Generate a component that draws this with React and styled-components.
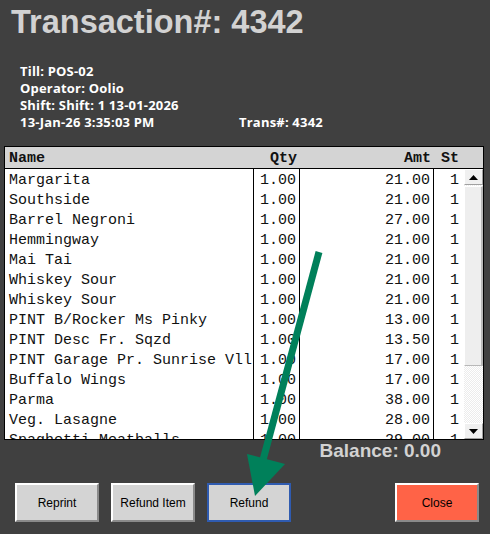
import React from 'react';
import styled, { createGlobalStyle } from 'styled-components';

const GlobalStyle = createGlobalStyle`
  html, body {
    margin: 0;
    padding: 0;
    background: #404040;
  }
`;

const Screen = styled.div`
  position: relative;
  width: 490px;
  height: 534px;
  overflow: hidden;
  background: #404040;
  font-family: "Liberation Sans", Arial, sans-serif;
`;

const Title = styled.div`
  padding: 4px 0 0 11px;
  font-size: 32.5px;
  line-height: 36px;
  font-weight: 700;
  color: #d2d2d2;
  white-space: nowrap;
`;

const Info = styled.div`
  margin-top: 23px;
  padding-left: 20px;
  font-family: "Open Sans", "Noto Sans", sans-serif;
  font-size: 13px;
  line-height: 17px;
  letter-spacing: 0.2px;
  font-weight: 700;
  color: #ffffff;
`;

const InfoLine = styled.div`
  display: flex;
  white-space: nowrap;
`;

const InfoLeft = styled.span`
  width: 219px;
`;

const Table = styled.div`
  margin: 15px 0 0 4px;
  width: 478px;
  border: 1px solid #000;
  background: #fff;
  font-family: "Liberation Mono", "Courier New", monospace;
  font-size: 15px;
  color: #111;
`;

const Header = styled.div`
  display: flex;
  box-sizing: border-box;
  height: 22px;
  padding-top: 1px;
  line-height: 21px;
  background: #d4d4d4;
  border-bottom: 1px solid #000;
  font-weight: 700;
`;

const Body = styled.div`
  display: flex;
  height: 270px;
`;

const Rows = styled.div`
  flex: 1;
  overflow: hidden;
`;

const Row = styled.div`
  display: flex;
  height: 20px;
  line-height: 20px;
`;

const Cell = styled.div`
  box-sizing: border-box;
  width: ${p => p.$w}px;
  flex: ${p => (p.$w ? 'none' : 1)};
  padding: ${p => (p.$right ? `${p.$top || 0}px 3px 0 0` : `${p.$top || 0}px 0 0 4px`)};
  text-align: ${p => (p.$right ? 'right' : 'left')};
  border-right: ${p => (p.$line ? '1px solid #000' : 'none')};
  white-space: nowrap;
  overflow: hidden;
`;

const Scrollbar = styled.div`
  width: 19px;
  display: flex;
  flex-direction: column;
  background-color: #f6f6f6;
  background-image: repeating-conic-gradient(#ffffff 0 25%, #ececec 0 50%);
  background-size: 2px 2px;
`;

const ScrollButton = styled.div`
  box-sizing: border-box;
  height: 16px;
  display: flex;
  align-items: center;
  justify-content: center;
  background: #f0f0f0;
  border-top: 1px solid #fff;
  border-left: 1px solid #fff;
  border-right: 1px solid #a0a0a0;
  border-bottom: 1px solid #a0a0a0;
  margin-top: ${p => (p.$down ? 'auto' : '0')};
`;

const Thumb = styled.div`
  box-sizing: border-box;
  height: 180px;
  margin-top: 1px;
  background: #eeeeee;
  border-top: 1px solid #fff;
  border-left: 1px solid #fff;
  border-right: 2px solid #b8b8b8;
  border-bottom: 1px solid #b8b8b8;
`;

const Balance = styled.div`
  padding-right: 49px;
  text-align: right;
  font-size: 19px;
  line-height: 22px;
  font-weight: 700;
  color: #d2d2d2;
`;

const Buttons = styled.div`
  display: flex;
  gap: 12px;
  margin-top: 21px;
  padding: 0 11px 0 15px;
`;

const Button = styled.button`
  box-sizing: border-box;
  width: 84px;
  height: 39px;
  margin-left: ${p => (p.$push ? 'auto' : '0')};
  padding: 0;
  font-family: "Liberation Sans", Arial, sans-serif;
  font-size: 12px;
  color: #000;
  background: ${p => (p.$danger ? '#ff6347' : '#d4d4d4')};
  border: 2px solid;
  border-color: ${p => (p.$active ? '#2f5bb0' : '#ffffff #8a8a8a #8a8a8a #ffffff')};
  cursor: pointer;
`;

const Overlay = styled.svg`
  position: absolute;
  left: 0;
  top: 0;
  pointer-events: none;
`;

const items = [
  ['Margarita', '1.00', '21.00'],
  ['Southside', '1.00', '21.00'],
  ['Barrel Negroni', '1.00', '27.00'],
  ['Hemmingway', '1.00', '21.00'],
  ['Mai Tai', '1.00', '21.00'],
  ['Whiskey Sour', '1.00', '21.00'],
  ['Whiskey Sour', '1.00', '21.00'],
  ['PINT B/Rocker Ms Pinky', '1.00', '13.00'],
  ['PINT Desc Fr. Sqzd', '1.00', '13.50'],
  ['PINT Garage Pr. Sunrise Vll', '1.00', '17.00'],
  ['Buffalo Wings', '1.00', '17.00'],
  ['Parma', '1.00', '38.00'],
  ['Veg. Lasagne', '1.00', '28.00'],
  ['Spaghetti Meatballs', '1.00', '29.00'],
];

const Arrow = ({ down }) => (
  <svg width="9" height="5" viewBox="0 0 9 5">
    <polygon points={down ? '0,0 9,0 4.5,5' : '0,5 9,5 4.5,0'} fill="#000" />
  </svg>
);

export default function App() {
  return (
    <Screen>
      <GlobalStyle />
      <Title>Transaction#: 4342</Title>
      <Info>
        <InfoLine>Till: POS-02</InfoLine>
        <InfoLine>Operator: Oolio</InfoLine>
        <InfoLine>Shift: Shift: 1 13-01-2026</InfoLine>
        <InfoLine>
          <InfoLeft>13-Jan-26 3:35:03 PM</InfoLeft>
          <span>Trans#: 4342</span>
        </InfoLine>
      </Info>

      <Table>
        <Header>
          <Cell $w={249}>Name</Cell>
          <Cell $w={46} $right>Qty</Cell>
          <Cell $w={134} $right>Amt</Cell>
          <Cell $right style={{ paddingRight: 24 }}>St</Cell>
        </Header>
        <Body>
          <Rows>
            {items.map(([name, qty, amt], key) => (
              <Row key={key}>
                <Cell $w={249} $top={2} $line>{name}</Cell>
                <Cell $w={46} $top={2} $right $line>{qty}</Cell>
                <Cell $w={134} $top={2} $right $line>{amt}</Cell>
                <Cell $top={2} $right style={{ paddingRight: 5 }}>1</Cell>
              </Row>
            ))}
          </Rows>
          <Scrollbar>
            <ScrollButton><Arrow /></ScrollButton>
            <Thumb />
            <ScrollButton $down><Arrow down /></ScrollButton>
          </Scrollbar>
        </Body>
      </Table>

      <Balance>Balance: 0.00</Balance>

      <Buttons>
        <Button>Reprint</Button>
        <Button>Refund Item</Button>
        <Button $active>Refund</Button>
        <Button $push $danger>Close</Button>
      </Buttons>

      <Overlay width="490" height="534" viewBox="0 0 490 534">
        <line x1="319" y1="252" x2="263" y2="460" stroke="#00805a" strokeWidth="7" />
        <polygon points="247,454 285,464 255,496" fill="#00805a" />
      </Overlay>
    </Screen>
  );
}
